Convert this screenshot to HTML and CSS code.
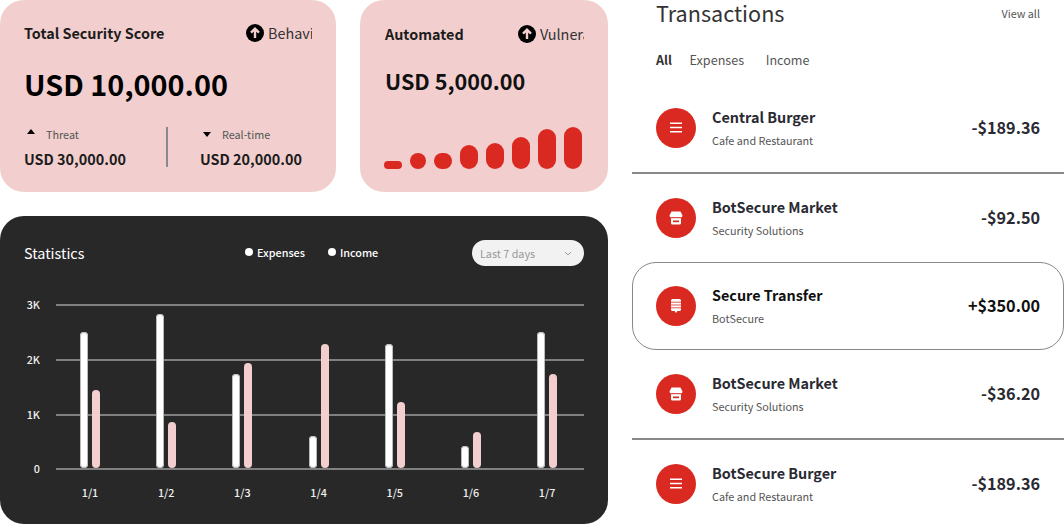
FILE: index.html
```html
<!DOCTYPE html>
<html lang="en">
<head>
    <meta charset="UTF-8">
    <title>Security Dashboard</title>
    <link rel="stylesheet" href="styles.css">
</head>
<body>
    <div class="page">
        <div class="leftColumn">
            <div class="topCards">
                <div class="card scoreCard">
                    <div class="cardHead">
                        <span class="cardTitle">Total Security Score</span>
                        <span class="cardTag">
                            <svg class="arrowIcon" viewBox="0 0 18 18"><circle cx="9" cy="9" r="9" fill="#000"/><path d="M9 14V5M5 8.6 9 4.6l4 4" fill="none" stroke="#f2cfce" stroke-width="2.4"/></svg>
                            <span class="tagText">Behavior</span>
                        </span>
                    </div>
                    <div class="bigAmount">USD 10,000.00</div>
                    <div class="splitRow">
                        <div class="splitCell">
                            <div class="splitLabel"><span class="caretUp"></span>Threat</div>
                            <div class="splitValue">USD 30,000.00</div>
                        </div>
                        <div class="splitLine"></div>
                        <div class="splitCell">
                            <div class="splitLabel"><span class="caretDown"></span>Real-time</div>
                            <div class="splitValue">USD 20,000.00</div>
                        </div>
                    </div>
                </div>
                <div class="card autoCard">
                    <div class="cardHead">
                        <span class="cardTitle">Automated</span>
                        <span class="cardTag">
                            <svg class="arrowIcon" viewBox="0 0 18 18"><circle cx="9" cy="9" r="9" fill="#000"/><path d="M9 14V5M5 8.6 9 4.6l4 4" fill="none" stroke="#f2cfce" stroke-width="2.4"/></svg>
                            <span class="tagText">Vulnerability</span>
                        </span>
                    </div>
                    <div class="midAmount">USD 5,000.00</div>
                    <div class="miniBars">
                        <span class="miniBar" style="height:8px"></span>
                        <span class="miniBar thin" style="height:16px"></span>
                        <span class="miniBar" style="height:16px"></span>
                        <span class="miniBar" style="height:24px"></span>
                        <span class="miniBar" style="height:26px"></span>
                        <span class="miniBar" style="height:32px"></span>
                        <span class="miniBar" style="height:40px"></span>
                        <span class="miniBar" style="height:42px"></span>
                    </div>
                </div>
            </div>

            <div class="statsCard">
                <div class="statsHead">
                    <span class="statsTitle">Statistics</span>
                    <div class="legend">
                        <span class="legendItem"><span class="dot"></span>Expenses</span>
                        <span class="legendItem"><span class="dot"></span>Income</span>
                    </div>
                    <div class="rangeSelect">
                        <span>Last 7 days</span>
                        <svg class="chevron" viewBox="0 0 8 5"><path d="M1 1l3 3 3-3" fill="none" stroke="#999" stroke-width="1"/></svg>
                    </div>
                </div>
                <div class="plot">
                    <div class="axisRow"><span class="axisLabel">3K</span><span class="gridLine"></span></div>
                    <div class="axisRow"><span class="axisLabel">2K</span><span class="gridLine"></span></div>
                    <div class="axisRow shortRow"><span class="axisLabel">1K</span><span class="gridLine"></span></div>
                    <div class="axisRow lastRow"><span class="axisLabel">0</span><span class="gridLine"></span></div>
                    <div class="barGroups">
                        <div class="barGroup"><span class="bar expense" style="height:136px"></span><span class="bar income" style="height:78px"></span></div>
                        <div class="barGroup"><span class="bar expense" style="height:154px"></span><span class="bar income" style="height:46px"></span></div>
                        <div class="barGroup"><span class="bar expense" style="height:94px"></span><span class="bar income" style="height:105px"></span></div>
                        <div class="barGroup"><span class="bar expense" style="height:32px"></span><span class="bar income" style="height:124px"></span></div>
                        <div class="barGroup"><span class="bar expense" style="height:124px"></span><span class="bar income" style="height:66px"></span></div>
                        <div class="barGroup"><span class="bar expense" style="height:22px"></span><span class="bar income" style="height:36px"></span></div>
                        <div class="barGroup"><span class="bar expense" style="height:136px"></span><span class="bar income" style="height:94px"></span></div>
                    </div>
                </div>
                <div class="dateRow">
                    <span class="dateLabel">1/1</span>
                    <span class="dateLabel">1/2</span>
                    <span class="dateLabel">1/3</span>
                    <span class="dateLabel">1/4</span>
                    <span class="dateLabel">1/5</span>
                    <span class="dateLabel">1/6</span>
                    <span class="dateLabel">1/7</span>
                </div>
            </div>
        </div>

        <div class="rightColumn">
            <div class="transHead">
                <h2 class="transTitle">Transactions</h2>
                <span class="viewAll">View all</span>
            </div>
            <div class="tabs">
                <span class="tab active">All</span>
                <span class="tab">Expenses</span>
                <span class="tab">Income</span>
            </div>

            <div class="transRow">
                <span class="transIcon"><svg viewBox="0 0 16 16"><path d="M2 3.200h12M2 7.500h12M2 11.800h12" stroke="#fff" stroke-width="1.500"/></svg></span>
                <div class="transInfo"><div class="transName">Central Burger</div><div class="transSub">Cafe and Restaurant</div></div>
                <div class="transAmount">-$189.36</div>
            </div>
            <div class="transLine"></div>
            <div class="transRow">
                <span class="transIcon"><svg viewBox="0 0 16 16"><path d="M3.500 1.500h9l2 4a2 2 0 0 1-1.500 2V13a1.500 1.500 0 0 1-1.500 1.500h-7A1.500 1.500 0 0 1 3 13V7.500a2 2 0 0 1-1.500-2z" fill="#fff"/><path d="M3 7.700h10" stroke="#d92921" stroke-width="1"/><path d="M5 10.500h6v1.700H5z" fill="#d92921"/></svg></span>
                <div class="transInfo"><div class="transName">BotSecure Market</div><div class="transSub">Security Solutions</div></div>
                <div class="transAmount">-$92.50</div>
            </div>
            <div class="transRow selected">
                <span class="transIcon"><svg viewBox="0 0 16 16"><path d="M3 2.500A1.500 1.500 0 0 1 4.500 1h7A1.500 1.500 0 0 1 13 2.500v9a1.500 1.500 0 0 1-1.500 1.500H9.500L8 15l-1.500-2h-2A1.500 1.500 0 0 1 3 11.500z" fill="#fff"/><path d="M3 4.200h10M3 7h10M3 9.800h10" stroke="#d92921" stroke-width=".8"/></svg></span>
                <div class="transInfo"><div class="transName dark">Secure Transfer</div><div class="transSub">BotSecure</div></div>
                <div class="transAmount dark">+$350.00</div>
            </div>
            <div class="transRow">
                <span class="transIcon"><svg viewBox="0 0 16 16"><path d="M3.500 1.500h9l2 4a2 2 0 0 1-1.500 2V13a1.500 1.500 0 0 1-1.500 1.500h-7A1.500 1.500 0 0 1 3 13V7.500a2 2 0 0 1-1.500-2z" fill="#fff"/><path d="M3 7.700h10" stroke="#d92921" stroke-width="1"/><path d="M5 10.500h6v1.700H5z" fill="#d92921"/></svg></span>
                <div class="transInfo"><div class="transName">BotSecure Market</div><div class="transSub">Security Solutions</div></div>
                <div class="transAmount">-$36.20</div>
            </div>
            <div class="transLine"></div>
            <div class="transRow">
                <span class="transIcon"><svg viewBox="0 0 16 16"><path d="M2 3.200h12M2 7.500h12M2 11.800h12" stroke="#fff" stroke-width="1.500"/></svg></span>
                <div class="transInfo"><div class="transName">BotSecure Burger</div><div class="transSub">Cafe and Restaurant</div></div>
                <div class="transAmount">-$189.36</div>
            </div>
        </div>
    </div>
</body>
</html>
```

FILE: styles.css
```css
html, body {
    margin: 0;
    height: 100%;
    overflow: hidden;
    background: #fff;
}
body {
    font-family: "Noto Sans CJK KR", "Noto Sans", sans-serif;
    color: #000;
}
.page {
    display: flex;
    gap: 24px;
    width: 1064px;
    height: 524px;
    overflow: hidden;
}

/* linke Seite */
.leftColumn {
    width: 608px;
    flex: none;
    display: flex;
    flex-direction: column;
    gap: 24px;
}
.topCards {
    display: flex;
    gap: 24px;
    height: 192px;
}
.card {
    background: #f2cfce;
    border-radius: 24px;
    padding: 23px 24px 24px;
    box-sizing: border-box;
}
.scoreCard {
    width: 336px;
}
.autoCard {
    width: 248px;
}
.cardHead {
    display: flex;
    justify-content: space-between;
    align-items: center;
    height: 20px;
    font-size: 14.4px;
    line-height: 20px;
}
.autoCard .cardHead {
    margin-top: 1px;
}
.autoCard .cardTitle {
    margin-left: 1px;
}
.cardTitle {
    font-weight: 700;
    color: #1c1c1c;
}
.cardTag {
    display: flex;
    align-items: center;
    gap: 4px;
    color: #333;
}
.arrowIcon {
    width: 18px;
    height: 18px;
    flex: none;
}
.tagText {
    width: 44px;
    overflow: hidden;
    white-space: nowrap;
}
.bigAmount {
    margin-top: 19px;
    font-size: 28.8px;
    line-height: 44px;
    font-weight: 700;
}
.midAmount {
    margin-top: 19px;
    margin-left: 1px;
    font-size: 21.6px;
    line-height: 36px;
    font-weight: 700;
    color: #111;
}
.splitRow {
    display: flex;
    margin-top: 21px;
    height: 40px;
}
.splitCell {
    flex: none;
    width: 142px;
}
.splitCell:last-child {
    width: 112px;
    padding-left: 32px;
}
.splitLine {
    flex: none;
    width: 2px;
    height: 40px;
    background: #8a8a8a;
}
.splitLabel {
    display: flex;
    align-items: center;
    font-size: 10.8px;
    line-height: 14px;
    color: #555;
    padding-left: 3px;
}
.caretUp, .caretDown {
    width: 0;
    height: 0;
    border-left: 4.5px solid transparent;
    border-right: 4.5px solid transparent;
    margin-right: 11px;
}
.caretUp {
    border-bottom: 5px solid #000;
    margin-top: -5px;
}
.caretDown {
    border-top: 5px solid #000;
}
.splitValue {
    margin-top: 8px;
    font-size: 14.4px;
    line-height: 20px;
    font-weight: 700;
    color: #1c1c1c;
}
.miniBars {
    display: flex;
    align-items: flex-end;
    gap: 8px;
    height: 42px;
    margin-top: 28px;
}
.miniBar {
    width: 18px;
    background: #d92921;
    border-radius: 9px;
}
.miniBar.thin {
    width: 16px;
}

/* Statistik */
.statsCard {
    background: #282828;
    border-radius: 24px;
    height: 308px;
    padding: 24px;
    box-sizing: border-box;
    color: #fff;
}
.statsHead {
    display: flex;
    align-items: center;
    height: 26px;
}
.statsTitle {
    width: 221px;
    font-size: 14.4px;
    line-height: 26px;
}
.legend {
    display: flex;
    gap: 23px;
    font-size: 10.8px;
    font-weight: 500;
    margin-bottom: 2px;
}
.legendItem {
    display: flex;
    align-items: center;
    gap: 4px;
}
.dot {
    width: 8px;
    height: 8px;
    border-radius: 50%;
    background: #fff;
}
.rangeSelect {
    margin-left: auto;
    width: 112px;
    height: 26px;
    box-sizing: border-box;
    padding: 0 12px 0 8px;
    border-radius: 13px;
    background: #f2f2f2;
    color: #999;
    font-size: 10.8px;
    display: flex;
    align-items: center;
    justify-content: space-between;
}
.chevron {
    width: 8px;
    height: 5px;
}
.plot {
    position: relative;
    margin-top: 38px;
}
.axisRow {
    display: flex;
    align-items: flex-start;
    height: 55px;
}
.axisRow.shortRow {
    height: 54px;
}
.axisRow.lastRow {
    height: 2px;
}
.axisLabel {
    width: 16px;
    margin-top: -1px;
    margin-right: 16px;
    font-size: 10.8px;
    font-weight: 500;
    text-align: right;
    color: #eee;
    line-height: 2px;
}
.gridLine {
    flex: 1;
    height: 2px;
    background: #808080;
}
.barGroups {
    position: absolute;
    left: 56px;
    bottom: 2px;
    display: flex;
    align-items: flex-end;
    gap: 56.2px;
}
.barGroup {
    width: 20px;
    display: flex;
    align-items: flex-end;
    justify-content: space-between;
}
.bar {
    width: 8px;
    border-radius: 4px;
}
.bar.expense {
    background: #fff;
    box-shadow: inset 0 0 0 1px #bbb;
}
.bar.income {
    background: #f2cfce;
}
.dateRow {
    display: flex;
    gap: 56.2px;
    margin-top: 14px;
    margin-left: 56px;
}
.dateLabel {
    width: 20px;
    text-align: center;
    font-size: 10.8px;
    font-weight: 500;
    line-height: 16px;
    color: #eee;
    white-space: nowrap;
}

/* rechte Seite */
.rightColumn {
    width: 432px;
    flex: none;
}
.transHead {
    display: flex;
    justify-content: space-between;
    align-items: center;
    height: 26px;
    padding: 0 24px;
}
.transTitle {
    margin: 0;
    font-size: 21.6px;
    line-height: 26px;
    font-weight: 400;
    color: #333;
}
.viewAll {
    font-size: 10.8px;
    color: #555;
}
.tabs {
    display: flex;
    gap: 21.6px;
    margin-top: 24px;
    height: 20px;
    padding: 0 24px;
    font-size: 12.6px;
    line-height: 20px;
    color: #555;
}
.tab.active {
    font-weight: 700;
    color: #333;
    margin-right: -4px;
}
.transRow {
    display: flex;
    align-items: center;
    height: 88px;
    box-sizing: border-box;
    padding: 0 24px;
}
.tabs + .transRow {
    margin-top: 14px;
}
.transRow.selected {
    border: 1px solid #888;
    border-radius: 24px;
    padding: 0 23px;
}
.transIcon {
    width: 40px;
    height: 40px;
    flex: none;
    border-radius: 50%;
    background: #d92921;
    display: flex;
    align-items: center;
    justify-content: center;
}
.transIcon svg {
    width: 16px;
    height: 16px;
}
.transInfo {
    flex: 1;
    margin-left: 16px;
}
.transName {
    font-size: 14.4px;
    line-height: 20px;
    font-weight: 700;
    color: #2a2a33;
}
.transSub {
    margin-top: 4px;
    font-size: 10.8px;
    line-height: 18px;
    color: #555;
}
.transAmount {
    font-size: 16.2px;
    line-height: 24px;
    font-weight: 700;
    color: #2a2a33;
    margin-bottom: 2px;
}
.dark {
    color: #111;
}
.transLine {
    height: 2px;
    background: #888;
}
```
